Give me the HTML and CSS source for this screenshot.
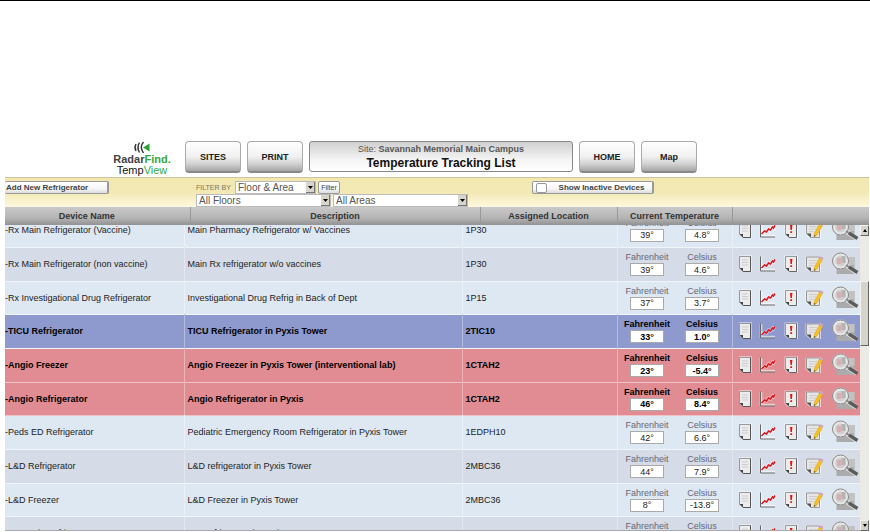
FILE: index.html
```html
<!DOCTYPE html>
<html lang="en">
<head>
    <meta charset="UTF-8">
    <meta name="viewport" content="width=device-width, initial-scale=1.0">
    <title>Temperature Tracking List</title>
    <link rel="stylesheet" href="styles.css">
</head>
<body>
    <svg class="symbols" width="0" height="0" aria-hidden="true">
        <symbol id="doc" viewBox="0 0 14 18">
            <path d="M2.500 1.500h10v14h-7l-3-3z" fill="#efefef" stroke="#fff" stroke-opacity=".6" stroke-width="2.600"/>
            <path d="M1.500 1.500h11v15h-7.500l-3.500-3.500z" fill="#ececec" stroke="#999"/>
            <path d="M12.500 1.500v15h-7.500" fill="none" stroke="#555"/>
            <path d="M1.500 13h3.500v3.500z" fill="#444"/>
            <path d="M4 5h6M4 7.500h6M4 10h6" stroke="#ccc"/>
        </symbol>
        <symbol id="chart" viewBox="0 0 18 18">
            <path d="M2 2v13h14" fill="none" stroke="#fff" stroke-opacity=".6" stroke-width="2.600"/>
            <path d="M2.500 13l3-3 2 1 2-3 2 1 2-3 1 1 1.500-2.500" fill="none" stroke="#fff" stroke-width="3" stroke-opacity=".5"/>
            <path d="M1.500 1.500v14.500h14.500" fill="none" stroke="#666"/>
            <path d="M2.500 13l3-3 2 1 2-3 2 1 2-3 1 1 1.500-2.500" fill="none" stroke="#d8161c" stroke-width="1.500"/>
        </symbol>
        <symbol id="alert" viewBox="0 0 14 18">
            <path d="M1.500 1.500h11.500v14.500h-8.500l-3-3z" fill="#eee" stroke="#fff" stroke-opacity=".6" stroke-width="2"/>
            <path d="M1.500 1.500h11v15h-7.500l-3.500-3.500z" fill="#ececec" stroke="#999"/>
            <path d="M12.500 1.500v15h-7" fill="none" stroke="#666"/>
            <path d="M1.500 13h3.500v3.500z" fill="#444"/>
            <path d="M6 4h2.400l-.5 5h-1.400zM6.300 10.200h1.800v1.800h-1.800z" fill="#e01414"/>
        </symbol>
        <symbol id="note" viewBox="0 0 20 18">
            <path d="M1.500 2.500h13.500v13.500h-9.500l-4-3.500z" fill="#e8e8e8" stroke="#fff" stroke-opacity=".6" stroke-width="2"/>
            <path d="M1.500 2h13v14.500h-8.500l-4.500-4z" fill="#e6e6e6" stroke="#999"/>
            <path d="M1.500 12.500h4.500v4z" fill="#555"/>
            <path d="M4 5.500h8M4 8h7M4 10.500h5" stroke="#ccc"/>
            <path d="M14.500 3l3 1.500-5.500 9.500-3 2 .2-3.500z" fill="#f7c021" stroke="#d89b1c" stroke-width=".5"/>
            <path d="M14.500 3l1-1.700 3 1.500-1 1.700z" fill="#d3a3c8"/>
            <path d="M9 16l.2-2 1.500.8z" fill="#553"/>
        </symbol>
        <symbol id="zoom" viewBox="0 0 28 24">
            <path d="M4.500 5h18v17h-18z" fill="#ababab"/>
            <path d="M15 5h7.500v8h-7.500z" fill="#c2c2c2"/>
            <circle cx="8.500" cy="9" r="7" fill="#d0d0d0" stroke="#e8e8e8" stroke-width="3"/>
            <circle cx="8.500" cy="9" r="8" fill="none" stroke="#858585" stroke-width="1"/>
            <path d="M5 6h4v6h-4z" fill="#d8aeb0"/>
            <path d="M9.500 4h4v7h-4z" fill="#b4b4b4"/>
            <path d="M15 14l10 6.500" stroke="#efefef" stroke-opacity=".7" stroke-width="5"/>
            <path d="M14 13l3.500 2.500" stroke="#888" stroke-width="2"/>
            <path d="M17 15l8.500 5.500" stroke="#5c5c5c" stroke-width="3.400"/>
        </symbol>
    </svg>

    <div class="app">
        <header class="topbar">
            <div class="logo">
                <svg class="logo-waves" width="18" height="13" viewBox="0 0 18 13" aria-hidden="true">
                    <path d="M3 3q-2 3.500 0 7M6.500 1.500q-3 5 0 10M10.500 1q-4.500 5 0 11" fill="none" stroke="#333" stroke-width="1.400"/>
                    <path d="M10 6.500l6.500-4v8z" fill="#28a337"/>
                </svg>
                <span class="logo-name">Radar<b>Find.</b></span>
                <span class="logo-product">Temp<b>View</b></span>
            </div>
            <button type="button" class="nav-btn">SITES</button>
            <button type="button" class="nav-btn">PRINT</button>
            <div class="title">
                <p class="site">Site: <b>Savannah Memorial Main Campus</b></p>
                <h1>Temperature Tracking List</h1>
            </div>
            <button type="button" class="nav-btn">HOME</button>
            <button type="button" class="nav-btn">Map</button>
        </header>

        <div class="filterbar">
            <div class="add">
                <button type="button" class="small-btn add-btn">Add New Refrigerator</button>
            </div>
            <form class="filters">
                <div class="filter-row">
                    <label class="filter-label" for="filter-by">FILTER BY</label>
                    <select id="filter-by" class="by"><option>Floor &amp; Area</option></select>
                    <button type="button" class="small-btn filter-btn">Filter</button>
                </div>
                <div class="filter-row">
                    <select class="place" aria-label="Floor"><option>All Floors</option></select>
                    <select class="place" aria-label="Area"><option>All Areas</option></select>
                </div>
            </form>
            <label class="small-btn inactive"><input type="checkbox"><span>Show Inactive Devices</span></label>
        </div>

        <table class="head">
            <tr>
                <th class="h-name">Device Name</th>
                <th>Description</th>
                <th class="h-location">Assigned Location</th>
                <th class="h-temp">Current Temperature</th>
                <th class="h-tools"></th>
            </tr>
        </table>

        <div class="list">
            <div class="viewport">
                <table class="devices">
                    <tbody id="rows"></tbody>
                </table>
            </div>
            <div class="scrollbar">
                <button type="button" class="arrow up" aria-label="Scroll up"></button>
                <div class="thumb"></div>
                <button type="button" class="arrow down" aria-label="Scroll down"></button>
            </div>
        </div>
    </div>

    <script>
        var devices = [
            ["-Rx Main Refrigerator (Vaccine)", "Main Pharmacy Refrigerator w/ Vaccines", "1P30", "39°", "4.8°", ""],
            ["-Rx Main Refrigerator (non vaccine)", "Main Rx refrigerator w/o vaccines", "1P30", "39°", "4.6°", ""],
            ["-Rx Investigational Drug Refrigerator", "Investigational Drug Refrig in Back of Dept", "1P15", "37°", "3.7°", ""],
            ["-TICU Refrigerator", "TICU Refrigerator in Pyxis Tower", "2TIC10", "33°", "1.0°", "cold"],
            ["-Angio Freezer", "Angio Freezer in Pyxis Tower (interventional lab)", "1CTAH2", "23°", "-5.4°", "alarm"],
            ["-Angio Refrigerator", "Angio Refrigerator in Pyxis", "1CTAH2", "46°", "8.4°", "alarm"],
            ["-Peds ED Refrigerator", "Pediatric Emergency Room Refrigerator in Pyxis Tower", "1EDPH10", "42°", "6.6°", ""],
            ["-L&amp;D Refrigerator", "L&amp;D refrigerator in Pyxis Tower", "2MBC36", "44°", "7.9°", ""],
            ["-L&amp;D Freezer", "L&amp;D Freezer in Pyxis Tower", "2MBC36", "8°", "-13.8°", ""],
            ["-ED Pyxis Refrigerator", "ED Refrigerator in Pyxis Tower", "1EDCU2", "40°", "4.4°", ""]
        ];
        var tools = [["doc", "Details"], ["chart", "Chart"], ["alert", "Alerts"], ["note", "Notes"], ["zoom", "Locate"]];
        var html = "";
        for(var i = 0;i < devices.length;i++){
            var d = devices[i];
            html += '<tr class="' + d[5] + '"><td class="name">' + d[0] + '</td><td>' + d[1] + '</td><td class="location">' + d[2] + '</td>';
            html += '<td class="temp"><div class="temps">';
            html += '<label>Fahrenheit<input type="text" readonly value="' + d[3] + '"></label>';
            html += '<label>Celsius<input type="text" readonly value="' + d[4] + '"></label></div></td>';
            html += '<td class="tools"><div class="icons">';
            for(var j = 0;j < tools.length;j++){
                html += '<button type="button" class="icon ' + tools[j][0] + '" aria-label="' + tools[j][1] + '"><svg><use href="#' + tools[j][0] + '"/></svg></button>';
            }
            html += '</div></td></tr>';
        }
        document.getElementById("rows").innerHTML = html;
    </script>
</body>
</html>
```
FILE: styles.css
```css
*{
    margin: 0;
    padding: 0;
    box-sizing: border-box;
}
body{
    font-family: "Liberation Sans", Arial, sans-serif;
    font-size: 9px;
    color: #222;
    background: #fff;
}
button, input, select{
    font: inherit;
    color: inherit;
}
.symbols{
    position: absolute;
}
.app{
    display: flex;
    flex-direction: column;
    height: 100vh;
    border-top: 1px solid #000;
    padding: 140px 1px 1px 5px;
    overflow: hidden;
}

/* top bar */
.topbar{
    display: flex;
    align-items: flex-start;
    gap: 6px;
    height: 36px;
    padding-left: 106px;
}
.logo{
    display: flex;
    flex-direction: column;
    align-items: center;
    width: 62px;
    margin-right: 6px;
    white-space: nowrap;
}
.logo-waves{
    flex: none;
}
.logo-name{
    font-size: 11px;
    line-height: 11px;
    font-weight: bold;
    color: #444;
}
.logo-product{
    font-size: 11px;
    line-height: 10px;
    color: #111;
}
.logo b{
    color: #35a83c;
}
.logo-product b{
    font-weight: normal;
}
.nav-btn{
    width: 56px;
    height: 32px;
    border: 1px solid #aaa;
    border-bottom: 2px solid #888;
    border-radius: 4px;
    background: linear-gradient(#fff, #f1f1f1 50%, #d2d2d2 75%, #a6a6a6);
    font-weight: bold;
}
.title{
    width: 264px;
    height: 31px;
    border: 1px solid #888;
    border-radius: 3px;
    background: linear-gradient(#d0d0d0, #f4f4f4 60%, #fff);
    text-align: center;
    white-space: nowrap;
}
.site{
    line-height: 14px;
    color: #555;
}
.title h1{
    font-size: 12px;
    line-height: 15px;
    color: #111;
}

/* filter bar */
.filterbar{
    display: flex;
    align-items: flex-start;
    height: 30px;
    padding-top: 3px;
    border-top: 1px solid #cbc59f;
    background: linear-gradient(#f2e7ae, #f3e9b5 50%, #fdf9e0);
}
.add{
    width: 191px;
}
.small-btn{
    height: 13px;
    border: 1px solid #999;
    border-right: 2px solid #999;
    border-radius: 2px;
    background: linear-gradient(#fff, #f6f6f6 60%, #ddd);
    font-size: 8px;
    font-weight: bold;
    line-height: 10px;
    color: #444;
    white-space: nowrap;
}
.add-btn{
    display: block;
    width: 104px;
    border-left: 0;
    padding-left: 1px;
    text-align: left;
}
.filter-row{
    display: flex;
    gap: 2px;
    height: 13px;
}
.filter-label{
    width: 37px;
    font-size: 7px;
    line-height: 13px;
    color: #776;
}
select{
    appearance: none;
    height: 13px;
    border: 1px solid #bbb;
    border-radius: 0;
    padding-left: 2px;
    background: #fff url("data:image/svg+xml,%3Csvg xmlns='http://www.w3.org/2000/svg' width='9' height='11'%3E%3Cpath d='M0 0h9v11H0z' fill='%23777'/%3E%3Cpath d='M0 0h8v10H0z' fill='%23d8d5cc'/%3E%3Cpath d='M2 4h5l-2.5 3z' fill='%23000'/%3E%3C/svg%3E") no-repeat right center;
    font-size: 10px;
    line-height: 11px;
    color: #555;
}
.by{
    width: 81px;
}
.place{
    width: 135px;
}
.filter-btn{
    width: 22px;
    border-right-width: 1px;
    font-size: 7px;
    font-weight: normal;
}
.inactive{
    display: flex;
    align-items: center;
    width: 122px;
    margin-left: 64px;
    padding-left: 3px;
}
.inactive input{
    appearance: none;
    width: 11px;
    height: 10px;
    border: 1px solid #999;
    border-radius: 2px;
    background: #fff;
}
.inactive span{
    flex: 1;
    padding-left: 4px;
    text-align: center;
}

/* column titles */
table{
    width: 100%;
    table-layout: fixed;
    border-collapse: collapse;
}
.head{
    background: linear-gradient(#c9c9c9, #b5b5b5 60%, #929292);
}
.head th{
    height: 18px;
    border-left: 1px solid #999;
    color: #333;
    white-space: nowrap;
}
.head .h-name{
    width: 185px;
    border-left: 0;
    padding-right: 21px;
}
.h-location{
    width: 137px;
}
.h-temp{
    width: 115px;
}
.h-tools{
    width: 137px;
}

/* device list */
.list{
    flex: 1;
    display: flex;
    min-height: 0;
}
.viewport{
    flex: 1;
    overflow: hidden;
    border-bottom: 1px solid #aaa;
}
/* list is scrolled part of the way into its first row */
.devices{
    margin-top: -12px;
}
.devices tr{
    height: 34px;
    background: #dee8f3;
    border-bottom: 1px solid #f0f5fa;
}
.devices tr:nth-child(3n){
    height: 33px;
}
.devices tr:nth-child(even){
    background: #d5dce8;
}
.devices tr.cold{
    background: #8e99cd;
    color: #000;
    font-weight: bold;
}
.devices tr.alarm{
    background: #e08c92;
    border-color: #efc4c9;
    color: #000;
    font-weight: bold;
}
.devices td{
    border-left: 1px solid rgba(255, 255, 255, .35);
    padding-left: 3px;
    white-space: nowrap;
}
.devices .name{
    width: 179px;
    border-left: 0;
    padding-left: 0;
}
.devices .location{
    width: 155px;
}
.devices .temp{
    width: 115px;
    padding: 0;
}
.devices .tools{
    width: 128px;
    padding: 0;
}
.temps{
    display: flex;
    gap: 8px;
    padding-left: 6px;
}
.temps label{
    display: flex;
    flex-direction: column;
    align-items: center;
    width: 47px;
    line-height: 11px;
    color: #667;
}
.cold label, .alarm label{
    color: #000;
}
.temps input{
    width: 34px;
    height: 13px;
    border: 1px solid #aaa;
    background: #fff;
    text-align: center;
    color: #222;
}
.cold input, .alarm input{
    color: #000;
}
.icons{
    display: flex;
    align-items: center;
    gap: 7px;
    padding-left: 5px;
}
.icon{
    width: 14px;
    height: 18px;
    border: 0;
    background: none;
    cursor: pointer;
}
.icon svg{
    display: block;
    width: 100%;
    height: 100%;
}
.chart{
    width: 18px;
}
.note{
    width: 20px;
}
.zoom{
    width: 28px;
    height: 24px;
}

/* scrollbar */
.scrollbar{
    display: flex;
    flex-direction: column;
    width: 9px;
    background: #eceae4;
}
.arrow, .thumb{
    border: 1px solid #f5f4f0;
    border-right-color: #666;
    border-bottom-color: #666;
    background: #d6d3ca;
}
.arrow{
    display: flex;
    align-items: center;
    justify-content: center;
    height: 11px;
}
.arrow::before{
    content: "";
    border: 2px solid transparent;
}
.up::before{
    border-top: 0;
    border-bottom: 3px solid #000;
}
.down::before{
    border-bottom: 0;
    border-top: 3px solid #000;
}
.thumb{
    height: 65px;
    margin: 45px 0 auto;
}
```
